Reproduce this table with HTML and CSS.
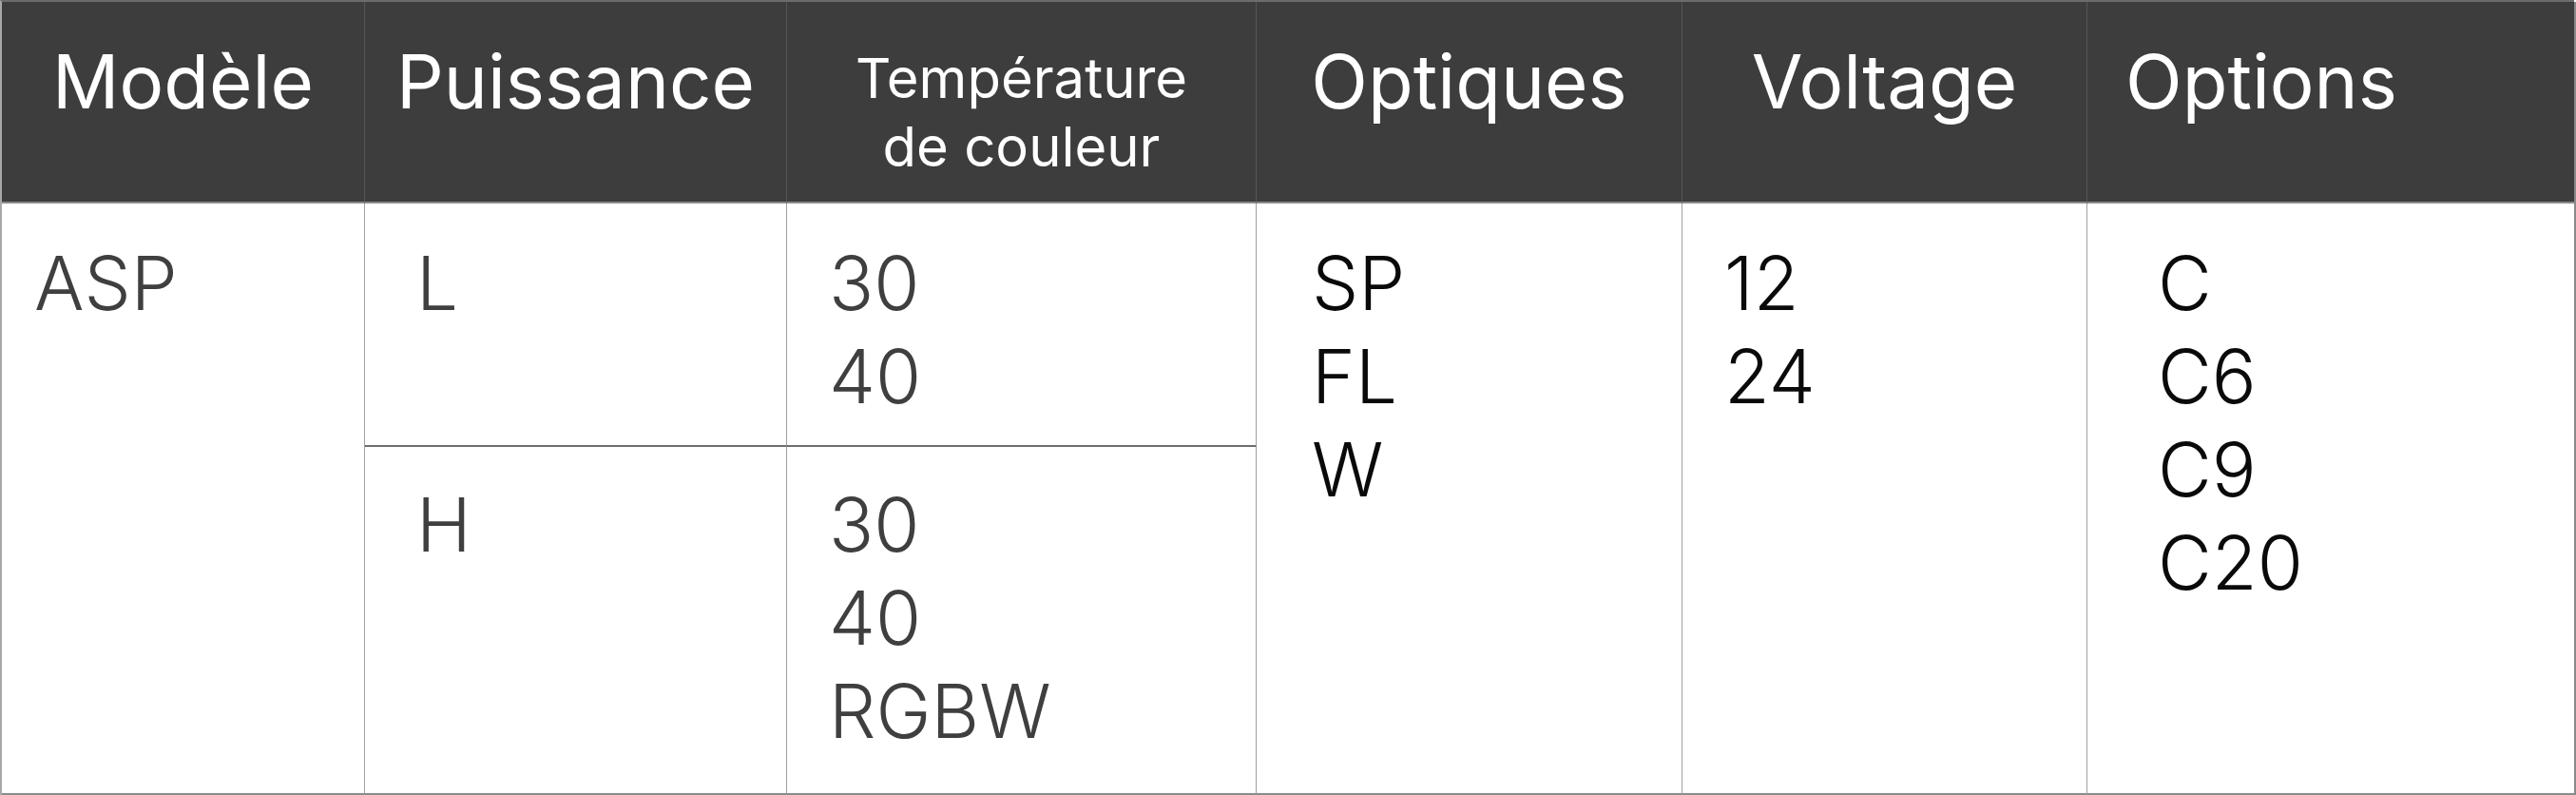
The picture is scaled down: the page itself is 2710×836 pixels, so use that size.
FILE: index.html
```html
<!DOCTYPE html>
<html lang="fr">
<head>
<meta charset="utf-8">
<title>ASP</title>
<link rel="stylesheet" href="styles.css">
</head>
<body>
<div class="spec">
  <div class="hd">Modèle</div>
  <div class="hd">Puissance</div>
  <div class="hd hd-small">Température<br>de couleur</div>
  <div class="hd">Optiques</div>
  <div class="hd">Voltage</div>
  <div class="hd hd-left">Options</div>

  <div class="cell span gray c-model">ASP</div>
  <div class="cell gray c-power row-top">L</div>
  <div class="cell gray c-temp row-top">30<br>40</div>
  <div class="cell span dark c-optic">SP<br>FL<br>W</div>
  <div class="cell span dark c-volt">12<br>24</div>
  <div class="cell span dark c-opt last">C<br>C6<br>C9<br>C20</div>

  <div class="cell gray c-power row-bottom">H</div>
  <div class="cell gray c-temp row-bottom">30<br>40<br>RGBW</div>
</div>
</body>
</html>
```

FILE: styles.css
```css
html, body {
  margin: 0;
  padding: 0;
  background: #ffffff;
}

.spec {
  display: grid;
  grid-template-columns: 382px 444px 494px 448px 426px 514px;
  grid-template-rows: 212px 256px 366px;
  width: 2708px;
  box-sizing: border-box;
  border-left: 2px solid #a8a8a8;
  border-top: 2px solid #6c6c6c;
  font-family: Inter, "Open Sans", sans-serif;
}

.hd {
  background: #3c3d3c;
  color: #ffffff;
  font-size: 78px;
  font-weight: 400;
  line-height: 96px;
  text-align: center;
  padding-top: 36px;
  border-right: 1px solid #555756;
  border-bottom: 2px solid #8a8a8a;
  box-sizing: border-box;
}

.hd-small {
  font-size: 58px;
  line-height: 72px;
  padding-top: 44px;
}

.hd-left {
  text-align: left;
  padding-left: 40px;
  border-right: 2px solid #8a8a8a;
}

.cell {
  font-size: 78px;
  font-weight: 300;
  line-height: 98px;
  padding-top: 35px;
  border-right: 1px solid #a0a0a0;
  border-bottom: 2px solid #8c8c8c;
  box-sizing: border-box;
}

.span {
  grid-row: 2 / span 2;
}

.gray { color: #3f3f3f; }
.dark { color: #0a0a0a; }

.c-model { padding-left: 34px; }
.c-power { padding-left: 54px; }
.c-temp { padding-left: 44px; }
.c-optic { padding-left: 58px; }
.c-volt { padding-left: 44px; }
.c-opt { padding-left: 74px; }

.row-top {
  grid-row: 2;
  border-bottom: 2px solid #6e6e6e;
}

.row-bottom {
  grid-row: 3;
  padding-top: 33px;
}

.c-power.row-bottom { grid-column: 2; }
.c-temp.row-bottom { grid-column: 3; }

.last { border-right: 2px solid #8a8a8a; }
```
